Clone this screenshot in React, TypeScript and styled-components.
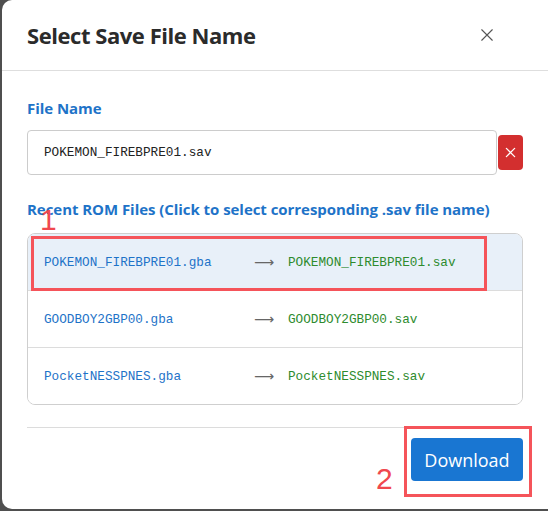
import React from "react";
import styled, { createGlobalStyle } from "styled-components";

const GlobalStyle = createGlobalStyle`
  html, body {
    margin: 0;
    padding: 0;
    background: #4f4f4f;
    overflow: hidden;
  }
`;

const Backdrop = styled.div`
  width: 548px;
  height: 511px;
  overflow: hidden;
  padding-left: 2px;
  box-sizing: border-box;
`;

const Dialog = styled.div`
  width: 560px;
  height: 509px;
  background: #ffffff;
  border-radius: 10px;
  display: flex;
  flex-direction: column;
  font-family: "Segoe UI", "Open Sans", "Noto Sans", sans-serif;
`;

const Header = styled.div`
  height: 70px;
  display: flex;
  align-items: center;
  padding: 0 25px;
  border-bottom: 1px solid #dedede;
`;

const Title = styled.h2`
  margin: 0;
  font-size: 22px;
  font-weight: 700;
  letter-spacing: -0.45px;
  color: #2b2b2b;
  flex: 1;
`;

const CloseButton = styled.button`
  border: none;
  background: none;
  padding: 0;
  margin-right: 43px;
  color: #555;
  display: flex;
  cursor: pointer;
`;

const Body = styled.div`
  padding: 27px 25px 0 25px;
  width: 496px;
  display: flex;
  flex-direction: column;
`;

const FieldLabel = styled.div`
  font-size: 15px;
  font-weight: 700;
  letter-spacing: -0.05px;
  color: #1e73c8;
  line-height: 20px;
`;

const InputRow = styled.div`
  display: flex;
  align-items: center;
  margin-top: 12px;
  margin-bottom: 24px;
`;

const NameInput = styled.input`
  flex: 1;
  height: 45px;
  box-sizing: border-box;
  border: 1px solid #cccccc;
  border-radius: 4px;
  padding: 0 16px;
  font-family: "Liberation Mono", monospace;
  font-size: 12.7px;
  color: #222;
  outline: none;
`;

const ClearButton = styled.button`
  width: 25px;
  height: 35px;
  margin-left: 1px;
  border: none;
  border-radius: 4px;
  background: #d32f2f;
  color: #fff;
  display: flex;
  align-items: center;
  justify-content: center;
  padding: 0;
`;

const Annotated = styled.div`
  position: relative;
`;

const Marker = styled.span<{ $size: number }>`
  position: absolute;
  z-index: 2;
  color: #f0484e;
  font-family: "Liberation Sans", Arial, sans-serif;
  font-size: ${(p) => p.$size}px;
  line-height: 1;
`;

const Callout = styled.div`
  position: absolute;
  z-index: 2;
  border: 3px solid #f5545a;
  pointer-events: none;
`;

const RomList = styled.div`
  margin-top: 14px;
  border: 1px solid #cfcfcf;
  border-radius: 8px;
  overflow: hidden;
`;

const RomRow = styled.div<{ $selected?: boolean }>`
  position: relative;
  height: 56px;
  display: flex;
  align-items: center;
  padding: 0 16px;
  font-family: "Liberation Mono", monospace;
  font-size: 12.7px;
  background: ${(p) => (p.$selected ? "#e8f0f9" : "#ffffff")};
  & + & {
    border-top: 1px solid #dcdcdc;
  }
`;

const RomName = styled.span`
  width: 210px;
  color: #1e73c8;
`;

const Arrow = styled.span`
  width: 34px;
  color: #666;
  font-family: "DejaVu Sans", sans-serif;
  font-size: 14px;
`;

const SaveName = styled.span`
  color: #2e8b2e;
`;

const Footer = styled.div`
  margin-top: 22px;
  border-top: 1px solid #dcdcdc;
  padding-top: 10px;
  display: flex;
  justify-content: flex-end;
`;

const DownloadButton = styled.button`
  width: 112px;
  height: 43px;
  border: none;
  border-radius: 4px;
  background: #1976d2;
  color: #ffffff;
  font-family: "Segoe UI", "Open Sans", "Noto Sans", sans-serif;
  font-size: 18px;
  cursor: pointer;
`;

const roms = [
  { rom: "POKEMON_FIREBPRE01.gba", save: "POKEMON_FIREBPRE01.sav" },
  { rom: "GOODBOY2GBP00.gba", save: "GOODBOY2GBP00.sav" },
  { rom: "PocketNESSPNES.gba", save: "PocketNESSPNES.sav" },
];

function CrossIcon({ size, stroke }: { size: number; stroke: number }) {
  return (
    <svg width={size} height={size} viewBox="0 0 16 16">
      <path
        d="M2 2 L14 14 M14 2 L2 14"
        stroke="currentColor"
        strokeWidth={stroke}
        strokeLinecap="round"
      />
    </svg>
  );
}

export default function App() {
  const selected = 0;

  return (
    <Backdrop>
      <GlobalStyle />
      <Dialog>
        <Header>
          <Title>Select Save File Name</Title>
          <CloseButton aria-label="close">
            <CrossIcon size={14} stroke={1.3} />
          </CloseButton>
        </Header>
        <Body>
          <FieldLabel>File Name</FieldLabel>
          <InputRow>
            <NameInput defaultValue="POKEMON_FIREBPRE01.sav" />
            <ClearButton aria-label="clear">
              <CrossIcon size={11} stroke={1.8} />
            </ClearButton>
          </InputRow>
          <Annotated>
            <FieldLabel>
              Recent ROM Files (Click to select corresponding .sav file name)
            </FieldLabel>
            <Marker $size={30} style={{ left: 13, top: 6 }}>
              1
            </Marker>
          </Annotated>
          <RomList>
            {roms.map((r, i) => (
              <RomRow key={r.rom} $selected={i === selected}>
                <RomName>{r.rom}</RomName>
                <Arrow>⟶</Arrow>
                <SaveName>{r.save}</SaveName>
                {i === selected && (
                  <Callout style={{ left: 3, top: 2, width: 450, height: 49 }} />
                )}
              </RomRow>
            ))}
          </RomList>
          <Footer>
            <Annotated>
              <DownloadButton>Download</DownloadButton>
              <Callout style={{ left: -7, top: -12, right: -9, bottom: -16 }} />
              <Marker $size={30} style={{ left: -35, top: 26 }}>
                2
              </Marker>
            </Annotated>
          </Footer>
        </Body>
      </Dialog>
    </Backdrop>
  );
}
